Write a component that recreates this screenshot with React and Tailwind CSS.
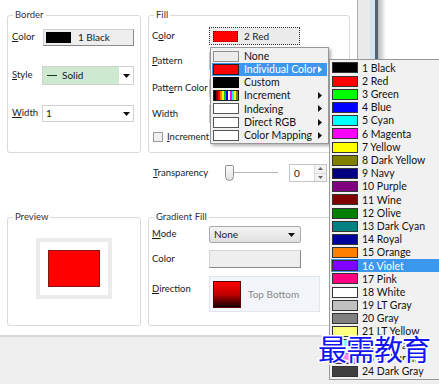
import React from 'react';

const Arrow = () => (
  <svg width="7" height="4" viewBox="0 0 7 4">
    <path d="M0 0h7L3.5 4z" fill="#111" />
  </svg>
);

const SubArrow = ({ white }) => (
  <svg width="4" height="7" viewBox="0 0 4 7">
    <path d="M0 0l4 3.5L0 7z" fill={white ? '#fff' : '#111'} />
  </svg>
);

function Group({ label, className, children }) {
  return (
    <div className={`relative rounded-[3px] border border-[#dadada] ${className}`}>
      <span className="absolute -top-[7px] left-[5px] bg-white px-[2px] text-[9.5px] leading-[12px] text-[#333]">
        {label}
      </span>
      {children}
    </div>
  );
}

const mainItems = [
  { label: 'None', swatch: 'bg-[#ececec] border-[#8f8f8f]' },
  { label: 'Individual Color', swatch: 'bg-[#ff0000] border-[#222]', sub: true, active: true },
  { label: 'Custom', swatch: 'bg-black border-black' },
  { label: 'Increment', swatch: 'rainbow', sub: true },
  { label: 'Indexing', swatch: 'bg-white border-[#555]', sub: true },
  { label: 'Direct RGB', swatch: 'bg-white border-[#555]', sub: true },
  { label: 'Color Mapping', swatch: 'bg-white border-[#555]', sub: true },
];

const rainbow = ['#000', '#800000', '#f00', '#ff8000', '#ff0', '#0c0', '#00f', '#fff', '#f0f', '#0ff', '#ff0', '#808000'];

const colors = [
  ['1 Black', '#000000'],
  ['2 Red', '#ff0000'],
  ['3 Green', '#00ff00'],
  ['4 Blue', '#0000ff'],
  ['5 Cyan', '#00ffff'],
  ['6 Magenta', '#ff00ff'],
  ['7 Yellow', '#ffff00'],
  ['8 Dark Yellow', '#808000'],
  ['9 Navy', '#000080'],
  ['10 Purple', '#800080'],
  ['11 Wine', '#800000'],
  ['12 Olive', '#008000'],
  ['13 Dark Cyan', '#008080'],
  ['14 Royal', '#00009a'],
  ['15 Orange', '#ff8000'],
  ['16 Violet', '#8000ff'],
  ['17 Pink', '#ff0080'],
  ['18 White', '#ffffff'],
  ['19 LT Gray', '#c0c0c0'],
  ['20 Gray', '#808080'],
  ['21 LT Yellow', '#ffff80'],
  ['22 LT Cyan', '#80ffff'],
  ['23 LT Purple', '#ff80ff'],
  ['24 Dark Gray', '#404040'],
];

export default function App() {
  return (
    <div className="relative h-[384px] w-[439px] overflow-hidden bg-white font-['Lato',sans-serif] text-[9.5px] text-[#1a1a1a]">
      <div className="flex h-[335px]">
        {/* left column */}
        <div className="w-[148px] px-[7px]">
          <Group label="Border" className="mt-[15px] h-[138px] pl-[4px] pt-[13px]">
            <div className="flex h-[17px] items-center">
              <span className="w-[31px]"><u>C</u>olor</span>
              <div className="flex h-[17px] w-[91px] items-center border border-[#d0d0d0] border-b-[#8a8a8a] border-r-[#8a8a8a] bg-[#eeeeee] pl-[2px]">
                <span className="h-[11px] w-[25px] bg-black" />
                <span className="ml-[7px] text-[10px]">1 Black</span>
              </div>
            </div>
            <div className="mt-[20px] flex h-[19px] items-center">
              <span className="w-[30px]"><u>S</u>tyle</span>
              <div className="flex h-[19px] w-[92px] items-center border border-[#d0d0d0] bg-white">
                <div className="flex h-full w-[76px] items-center bg-[#cde9cf] pl-[4px]">
                  <span className="h-[1px] w-[10px] bg-[#1a3a1a]" />
                  <span className="ml-[5px] text-[10px]">Solid</span>
                </div>
                <div className="flex flex-1 items-center justify-center"><Arrow /></div>
              </div>
            </div>
            <div className="mt-[20px] flex h-[17px] items-center">
              <span className="w-[30px]"><u>W</u>idth</span>
              <div className="flex h-[17px] w-[92px] items-center justify-between border border-[#d0d0d0] bg-white pl-[3px] pr-[3px]">
                <span className="text-[10px]">1</span>
                <Arrow />
              </div>
            </div>
          </Group>

          <Group label="Preview" className="mt-[64px] h-[109px] pl-[28px] pt-[20px]">
            <div className="flex h-[61px] w-[76px] items-center justify-center border-[4px] border-[#ececec] bg-white">
              <div className="h-[37px] w-[52px] border border-[#8a1414] bg-[#ff0000]" />
            </div>
          </Group>
        </div>

        {/* right column */}
        <div className="w-[209px] pr-[7px]">
          <Group label="Fill" className="mt-[15px] h-[138px] pl-[3px] pt-[11px]">
            <div className="flex h-[18px] items-center">
              <span className="w-[57px]">C<u>o</u>lor</span>
              <div className="flex h-[18px] w-[91px] items-center border border-dotted border-[#333] bg-[#ececec] pl-[3px]">
                <span className="h-[11px] w-[25px] border border-dotted border-[#400] bg-[#ff0000]" />
                <span className="ml-[6px] text-[10px]">2 Red</span>
              </div>
            </div>
            <div className="mt-[7px] flex h-[18px] items-center">
              <span className="w-[57px]"><u>P</u>attern</span>
              <div className="h-[18px] w-[91px] border border-[#c8c8c8] bg-white" />
            </div>
            <div className="mt-[9px] flex h-[18px] items-center">
              <span className="w-[57px]">Patt<u>e</u>rn Color</span>
              <div className="h-[18px] w-[91px] border border-[#c8c8c8] bg-[#eeeeee]" />
            </div>
            <div className="mt-[8px] flex h-[18px] items-center">
              <span className="w-[57px]">Width</span>
              <div className="h-[18px] w-[91px] border border-[#c8c8c8] bg-white" />
            </div>
            <div className="mt-[5px] flex h-[18px] items-center pl-[1px]">
              <span className="h-[10px] w-[10px] border border-[#9a9a9a] bg-[#f0f0f0]" />
              <span className="ml-[4px]"><u>I</u>ncrement I</span>
            </div>
          </Group>

          <div className="mt-[11px] flex h-[18px] items-center pl-[5px]">
            <span className="w-[72px]"><u>T</u>ransparency</span>
            <div className="flex items-center">
              <div className="h-[16px] w-[9px] rounded-b-[5px] rounded-t-[2px] border border-[#8e8e8e] bg-gradient-to-b from-[#fafafa] to-[#e2e2e2]" />
              <div className="h-[2px] w-[44px] border-t border-[#b8b8b8] border-b border-b-white" />
            </div>
            <div className="ml-[11px] flex h-[18px] w-[38px] items-center border border-[#c4c4c4] bg-white">
              <span className="flex-1 pl-[4px] text-[10px]">0</span>
              <div className="flex h-full w-[12px] flex-col border-l border-[#dcdcdc]">
                <div className="flex flex-1 items-center justify-center border-b border-[#dcdcdc] bg-[#f2f2f2]">
                  <svg width="5" height="3" viewBox="0 0 5 3"><path d="M0 3L2.5 0L5 3z" fill="#666" /></svg>
                </div>
                <div className="flex flex-1 items-center justify-center bg-[#f2f2f2]">
                  <svg width="5" height="3" viewBox="0 0 5 3"><path d="M0 0h5L2.5 3z" fill="#666" /></svg>
                </div>
              </div>
            </div>
          </div>

          <Group label="Gradient Fill" className="mt-[35px] h-[109px] pl-[3px] pt-[8px]">
            <div className="flex h-[17px] items-center">
              <span className="w-[57px]"><u>M</u>ode</span>
              <div className="flex h-[17px] w-[92px] items-center justify-between rounded-[2px] border border-[#a9a9a9] bg-gradient-to-b from-[#f4f4f4] to-[#e0e0e0] pl-[4px] pr-[5px]">
                <span className="text-[10px]">None</span>
                <Arrow />
              </div>
            </div>
            <div className="mt-[7px] flex h-[18px] items-center">
              <span className="w-[57px]">Color</span>
              <div className="h-[18px] w-[92px] border border-[#d4d4d4] border-b-[#8a8a8a] border-r-[#8a8a8a] bg-[#eeeeee]" />
            </div>
            <div className="mt-[8px] flex items-start">
              <span className="mt-[6px] w-[57px]"><u>D</u>irection</span>
              <div className="flex h-[36px] w-[111px] items-center border border-[#e2e6ec] bg-[#f2f5f9] pl-[3px]">
                <div className="h-[27px] w-[28px] border border-[#5a0000] bg-gradient-to-b from-[#ff0000] via-[#c00000] to-[#1a0000]" />
                <span className="ml-[7px] text-[10px] text-[#8a8a8a]">Top Bottom</span>
              </div>
            </div>
          </Group>
        </div>

        {/* window edge */}
        <div className="flex flex-1">
          <div className="w-[13px] border-l border-[#a8a8a8] bg-[#eaeaea]" />
          <div className="w-[5px] bg-[#d3e3f2]" />
          <div className="w-[3px] bg-[#56616d]" />
          <div className="w-[8px] bg-gradient-to-r from-[#b5b9bd] to-white" />
          <div className="flex-1 bg-white" />
        </div>
      </div>
      <div className="h-[49px] border-t-2 border-[#d6d6d6] bg-[#efefef]" />

      {/* popup menu */}
      <div className="absolute left-[210px] top-[47px] w-[119px] border border-[#979797] bg-[#f1f1f1] py-[1.5px] shadow-[2px_2px_3px_rgba(0,0,0,0.3)]">
        {mainItems.map((it) => (
          <div
            key={it.label}
            className={`mx-[1px] flex h-[13.2px] items-center pl-[1px] pr-[5px] text-[10.5px] ${it.active ? 'bg-[#3b98ee] text-white' : 'text-[#111]'}`}
          >
            {it.swatch === 'rainbow' ? (
              <span className="flex h-[11px] w-[26px] border border-[#222]">
                {rainbow.map((c, i) => (
                  <span key={i} className="h-full flex-1" style={{ backgroundColor: c }} />
                ))}
              </span>
            ) : (
              <span className={`h-[11px] w-[26px] border ${it.swatch}`} />
            )}
            <span className="ml-[5px] flex-1 leading-none">{it.label}</span>
            {it.sub && <SubArrow white={it.active} />}
          </div>
        ))}
      </div>

      {/* color submenu */}
      <div className="absolute left-[329px] top-[59px] w-[120px] border border-[#979797] bg-[#f1f1f1] py-[1.4px]">
        {colors.map(([name, c]) => {
          const active = name === '16 Violet';
          return (
            <div
              key={name}
              className={`mx-[1px] flex h-[13.2px] items-center pl-[1px] text-[10.5px] ${active ? 'bg-[#3b98ee] text-white' : 'text-[#111]'}`}
            >
              <span className="h-[11px] w-[26px] border border-[#333]" style={{ backgroundColor: c }} />
              <span className="ml-[4px] leading-none">{name}</span>
            </div>
          );
        })}
      </div>

      {/* watermark */}
      <div className="absolute left-[318px] top-[334px] font-['Noto_Sans_CJK_SC',sans-serif] text-[29px] leading-none tracking-[-1px] text-[#1414f0] [-webkit-text-stroke:3px_white] [paint-order:stroke_fill]">
        最需教育
      </div>
    </div>
  );
}
